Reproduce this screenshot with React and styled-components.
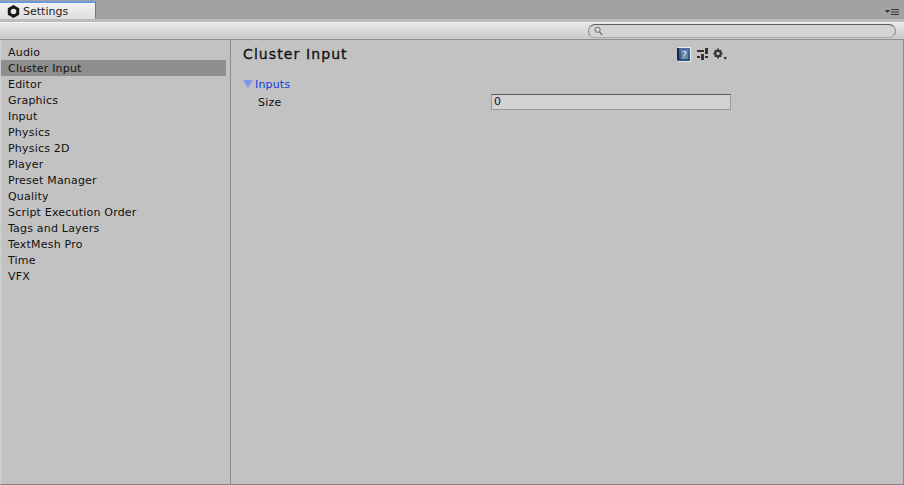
import styled, { createGlobalStyle } from "styled-components";

const GlobalStyle = createGlobalStyle`
  html, body {
    margin: 0;
    padding: 0;
    background: #c2c2c2;
    overflow: hidden;
  }
`;

const Window = styled.div`
  width: 904px;
  height: 485px;
  display: flex;
  flex-direction: column;
  font-family: "DejaVu Sans", Verdana, sans-serif;
  font-size: 11px;
  color: #111;
  background: #c2c2c2;
  overflow: hidden;
`;

const TabStrip = styled.div`
  height: 18px;
  flex: none;
  padding-top: 1px;
  display: flex;
  justify-content: space-between;
  background: #a2a2a2;
`;

const Tab = styled.div`
  width: 96px;
  height: 18px;
  box-sizing: border-box;
  display: flex;
  align-items: center;
  gap: 3px;
  padding-left: 7px;
  border-top: 2px solid #6f9ad8;
  border-right: 1px solid #777;
  background: linear-gradient(#f2f2f2, #dedede);
  color: #222;
`;

const PaneMenu = styled.div`
  display: flex;
  align-items: center;
  padding: 3px 4px 0 0;
`;

const Gap = styled.div`
  height: 3px;
  flex: none;
  background: #bcbcbc;
`;

const Toolbar = styled.div`
  height: 17px;
  flex: none;
  display: flex;
  justify-content: flex-end;
  align-items: center;
  padding-right: 8px;
  border-bottom: 1px solid #8f8f8f;
  background: linear-gradient(#f4f4f4 0 1px, #e8e8e8 1px, #c9c9c9);
`;

const Search = styled.div`
  width: 308px;
  height: 14px;
  box-sizing: border-box;
  display: flex;
  align-items: center;
  padding-left: 5px;
  border: 1px solid #8a8a8a;
  border-top-color: #5c5c5c;
  border-bottom-color: #a8a8a8;
  border-radius: 7px;
  background: #d4d4d4;
`;

const Body = styled.div`
  flex: 1;
  min-height: 0;
  display: flex;
  border-bottom: 1px solid #858585;
  border-left: 1px solid #d0d0d0;
  border-right: 1px solid #8c8c8c;
`;

const Sidebar = styled.ul`
  width: 230px;
  flex: none;
  box-sizing: border-box;
  margin: 0;
  padding: 4px 4px 0 0;
  list-style: none;
  border-right: 1px solid #8c8c8c;
`;

const SidebarItem = styled.li`
  height: 16px;
  line-height: 18px;
  padding-left: 7px;
  letter-spacing: 0.2px;
  background: ${(props) => (props.$selected ? "#8e8e8e" : "transparent")};
`;

const Content = styled.div`
  flex: 1;
  padding: 0 0 0 12px;
`;

const Header = styled.div`
  height: 28px;
  width: 484px;
  display: flex;
  align-items: center;
  justify-content: space-between;
`;

const Title = styled.h1`
  margin: 0;
  font-size: 14px;
  line-height: 30px;
  font-weight: 400;
  color: #111;
  -webkit-text-stroke: 0.3px #111;
  letter-spacing: 1.1px;
`;

const HeaderIcons = styled.div`
  display: flex;
  align-items: center;
  gap: 5px;

  svg:first-child {
    margin-right: 1px;
  }
`;

const Foldout = styled.div`
  height: 16px;
  margin-top: 8px;
  display: flex;
  align-items: center;
  gap: 2px;
  color: #0a3fe0;
  letter-spacing: 0.15px;
`;

const Arrow = styled.span`
  width: 0;
  height: 0;
  border-left: 5px solid transparent;
  border-right: 5px solid transparent;
  border-top: 8px solid #7f97e6;
`;

const Row = styled.div`
  height: 20px;
  display: flex;
  align-items: center;
  padding-left: 15px;
  letter-spacing: 0.2px;
`;

const RowLabel = styled.span`
  width: 233px;
  flex: none;
`;

const NumberField = styled.div`
  width: 240px;
  height: 16px;
  box-sizing: border-box;
  padding-left: 2px;
  line-height: 14px;
  border: 1px solid #9a9a9a;
  border-top-color: #5e5e5e;
  background: #d2d2d2;
`;

function UnityIcon() {
  return (
    <svg width="13" height="13" viewBox="0 0 13 13">
      <path
        fillRule="evenodd"
        fill="#1a1a1a"
        d="M6.5 0 L12.2 3.2 V9.8 L6.5 13 L0.8 9.8 V3.2 Z M6.5 3.7 A2.8 2.8 0 1 0 6.5 9.3 A2.8 2.8 0 1 0 6.5 3.7 Z"
      />
    </svg>
  );
}

function MenuIcon() {
  return (
    <svg width="15" height="8" viewBox="0 0 15 8">
      <path fill="#333" d="M0 2h5L2.5 5z" />
      <path fill="#333" d="M6 1h8v1H6zM6 3.500h8v1H6zM6 6h8v1H6z" />
    </svg>
  );
}

function SearchIcon() {
  return (
    <svg width="9" height="10" viewBox="0 0 9 10">
      <circle cx="3.6" cy="3.8" r="2.6" fill="none" stroke="#6d6d6d" />
      <path d="M5.500 6 L8.300 9" stroke="#777" strokeWidth="1.300" />
    </svg>
  );
}

function HelpIcon() {
  return (
    <svg width="14" height="15" viewBox="0 0 14 15">
      <defs>
        <linearGradient id="helpCover" x1="0" y1="0" x2="0" y2="1">
          <stop offset="0" stopColor="#4a719f" />
          <stop offset="1" stopColor="#2b4f7c" />
        </linearGradient>
      </defs>
      <path fill="#ececec" d="M1 0h13v15H2z" />
      <path fill="#14294a" d="M0 1h2v13L0 13z" />
      <rect x="2" y="1" width="11" height="13" fill="url(#helpCover)" />
      <rect x="4" y="3" width="7" height="9" fill="#6484ab" />
      <text
        x="7.500"
        y="11"
        fontSize="9"
        textAnchor="middle"
        fill="#eeeeee"
        fontFamily="DejaVu Sans"
      >
        ?
      </text>
    </svg>
  );
}

function PresetIcon() {
  return (
    <svg width="11" height="12" viewBox="0 0 11 12">
      <path
        fill="#333"
        d="M0 2h7v2H0zM8 0h3v6H8zM8 8h3v2H8zM0 8h3v2H0zM4 6h3v6H4z"
      />
    </svg>
  );
}

function GearIcon() {
  return (
    <svg width="14" height="13" viewBox="0 0 14 13">
      <g stroke="#333" strokeWidth="1.800">
        <path d="M5 0.500v2M5 8.500v2M0.500 5.500h2M7.500 5.500h2M1.800 2.300l1.400 1.400M6.800 7.300l1.400 1.400M1.800 8.700l1.400-1.400M6.800 3.700l1.400-1.400" />
      </g>
      <circle cx="5" cy="5.500" r="2.700" fill="none" stroke="#333" strokeWidth="2" />
      <path fill="#333" d="M10.500 9h3.500L12.200 12z" />
    </svg>
  );
}

const settingsPages = [
  "Audio",
  "Cluster Input",
  "Editor",
  "Graphics",
  "Input",
  "Physics",
  "Physics 2D",
  "Player",
  "Preset Manager",
  "Quality",
  "Script Execution Order",
  "Tags and Layers",
  "TextMesh Pro",
  "Time",
  "VFX",
];

function App() {
  return (
    <Window>
      <GlobalStyle />
      <TabStrip>
        <Tab>
          <UnityIcon />
          Settings
        </Tab>
        <PaneMenu>
          <MenuIcon />
        </PaneMenu>
      </TabStrip>
      <Gap />
      <Toolbar>
        <Search>
          <SearchIcon />
        </Search>
      </Toolbar>
      <Body>
        <Sidebar>
          {settingsPages.map((page) => (
            <SidebarItem key={page} $selected={page === "Cluster Input"}>
              {page}
            </SidebarItem>
          ))}
        </Sidebar>
        <Content>
          <Header>
            <Title>Cluster Input</Title>
            <HeaderIcons>
              <HelpIcon />
              <PresetIcon />
              <GearIcon />
            </HeaderIcons>
          </Header>
          <Foldout>
            <Arrow />
            Inputs
          </Foldout>
          <Row>
            <RowLabel>Size</RowLabel>
            <NumberField>0</NumberField>
          </Row>
        </Content>
      </Body>
    </Window>
  );
}

export default App;
